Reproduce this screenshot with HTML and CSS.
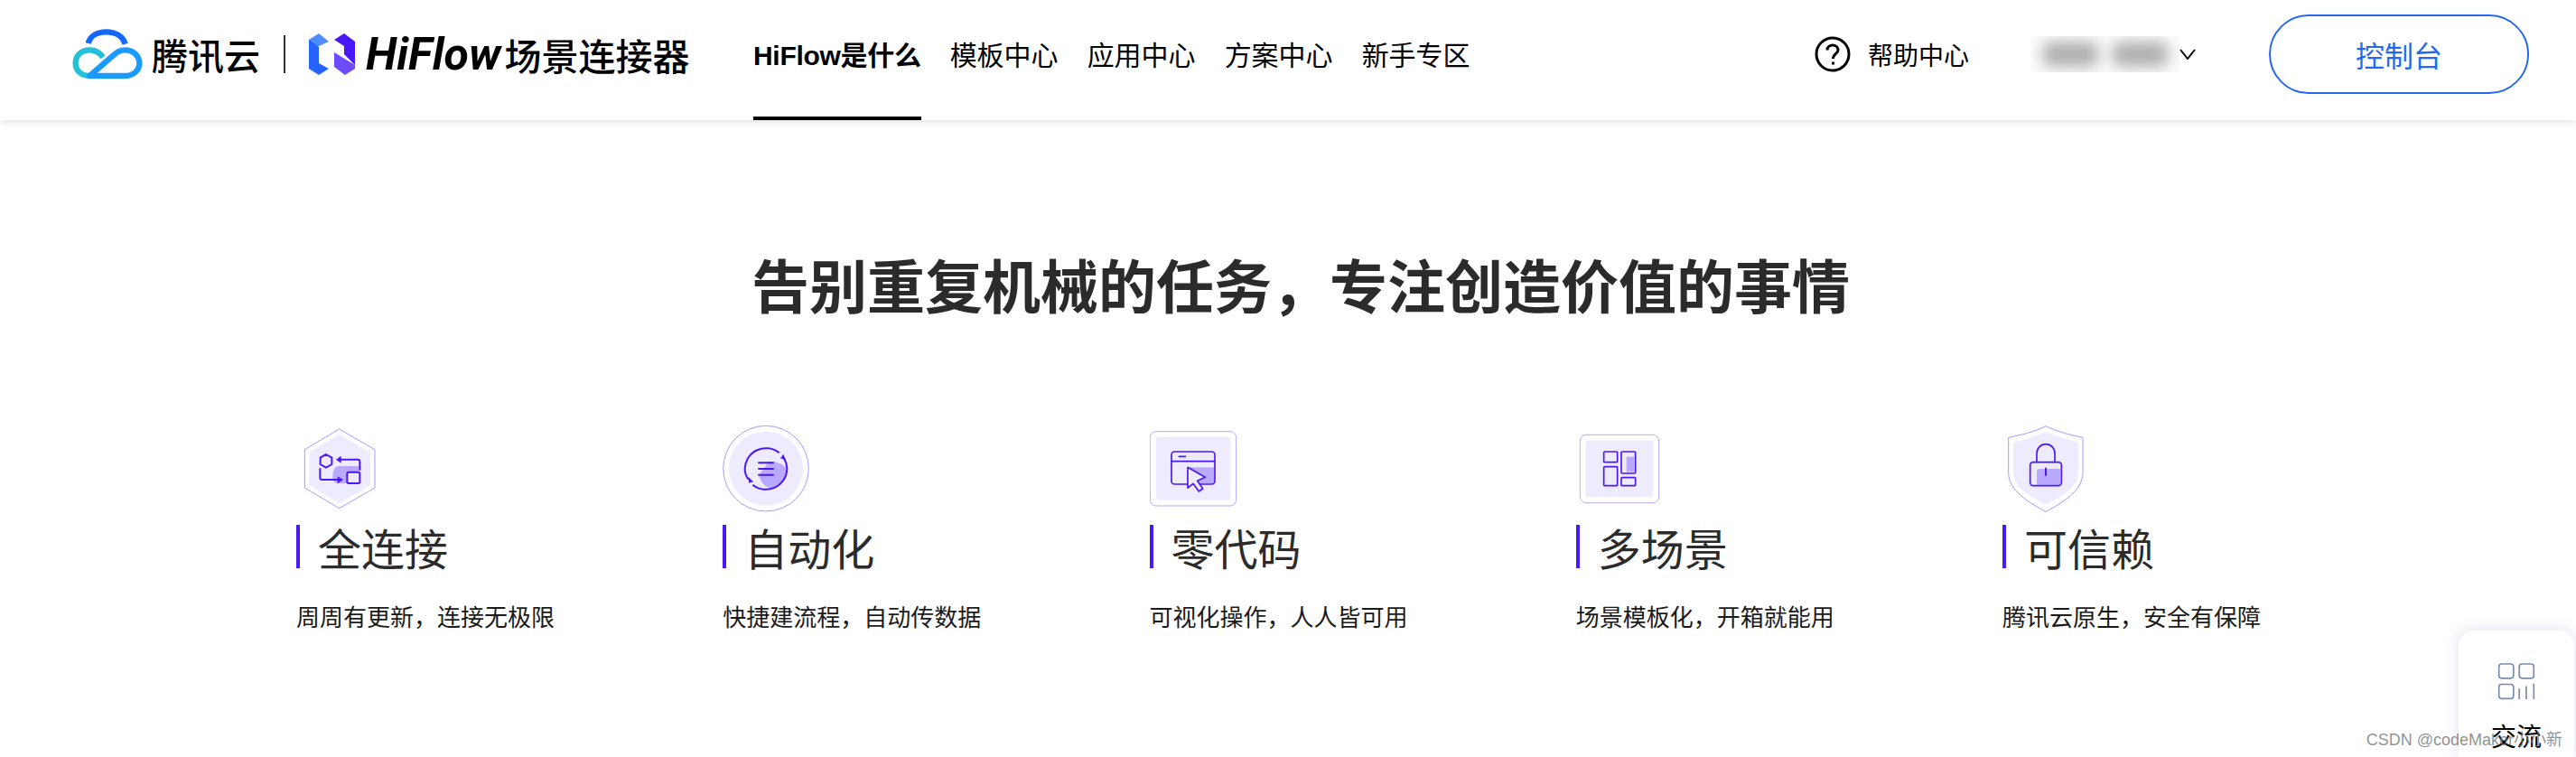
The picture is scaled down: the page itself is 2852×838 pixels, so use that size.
FILE: index.html
```html
<!DOCTYPE html>
<html lang="zh-CN">
<head>
    <meta charset="utf-8">
    <title>HiFlow场景连接器</title>
    <link rel="stylesheet" href="styles.css">
</head>
<body>
<header class="topbar">
    <div class="brand">
        <svg class="cloud" viewBox="54 30 240 180" width="80" height="60" fill="none" stroke-width="19">
            <path d="M113 84C120 58 145 46 172 46C205 46 228 62 236 86" stroke="#1467ff"/>
            <path d="M162 130C150 113 135 106 118 106C90 106 71 125 71 150C71 177 92 192 120 192" stroke="#23c1d8"/>
            <path d="M118 192H235C265 192 283 172 283 150C283 125 262 106 235 106C215 106 205 115 195 125L118 192Z" stroke="#1b9bff" stroke-linejoin="round"/>
        </svg>
        <span class="brand-tencent">腾讯云</span>
        <span class="brand-line"></span>
        <svg class="nlogo" viewBox="341 37 51 46" width="51" height="46">
            <path d="M341 44L352 37L363 46L352 51L341 56Z" fill="#4f8cff"/>
            <path d="M341 44L352 52V70L363 76L352 83L341 76Z" fill="#2563ff"/>
            <path d="M369 44L380 37L392 46V72L380 60V51Z" fill="#4a17f5"/>
            <path d="M369 58L392 72V76L381 83L369 74Z" fill="#6d4cff"/>
        </svg>
        <span class="brand-hiflow">HiFlow</span>
        <span class="brand-name">场景连接器</span>
    </div>
    <nav class="mainnav">
        <a class="navitem active" href="#">HiFlow是什么</a>
        <a class="navitem" href="#">模板中心</a>
        <a class="navitem" href="#">应用中心</a>
        <a class="navitem" href="#">方案中心</a>
        <a class="navitem" href="#">新手专区</a>
    </nav>
    <a class="help" href="#">
        <svg viewBox="0 0 40 40" width="40" height="40" fill="none" stroke="#000" stroke-width="3">
            <circle cx="20" cy="20" r="18"/>
            <path d="M14 15.5C14 12 17 10 20 10C23.500 10 26 12.500 26 15.500C26 19.500 20.500 19.500 20.500 25"/>
            <path d="M20.500 28.500V31.500"/>
        </svg>
        <span>帮助中心</span>
    </a>
    <div class="account">
        <div class="account-blur"><span class="blob"></span><span class="blob"></span></div>
        <svg viewBox="0 0 18 12" width="18" height="12" fill="none" stroke="#000" stroke-width="2"><path d="M1 1L9 11L17 1"/></svg>
    </div>
    <a class="console" href="#">控制台</a>
</header>

<main>
    <h1 class="headline">告别重复机械的任务&#xFF0C;专注创造价值的事情</h1>
    <section class="features">
        <div class="feature">
            <svg class="ficon" viewBox="54 33 330 288" width="110" height="96" fill="none">
                <path d="M197 45L315 113V240L197 308L82 240V113Z" stroke="#a899ff" stroke-width="3" stroke-linejoin="round"/>
                <path d="M197 62L300 122V232L197 292L97 232V122Z" fill="#efebff"/>
                <path d="M175 205Q175 168 195 168H262V188H222V225H190Q175 225 175 205Z" fill="#b9aaff"/>
                <g stroke="#4a17f5" stroke-width="6">
                    <path d="M153 129L172 140V162L153 173L134 162V140Z"/>
                    <path d="M265 182V152Q265 146 258 146H200"/>
                    <path d="M133 175V207Q133 213 140 213H195"/>
                    <rect x="223" y="188" width="42" height="37" rx="5"/>
                </g>
                <path d="M186 146L203 134V158Z" fill="#4a17f5"/>
                <path d="M210 213L191 202V226Z" fill="#4a17f5"/>
            </svg>
            <h3 class="ftitle">全连接</h3>
            <p class="fdesc">周周有更新&#xFF0C;连接无极限</p>
        </div>
        <div class="feature">
            <svg class="ficon" viewBox="60 33 330 288" width="110" height="96" fill="none">
                <circle cx="204" cy="176" r="142" stroke="#a899ff" stroke-width="3"/>
                <circle cx="204" cy="176" r="123" fill="#efebff"/>
                <path d="M215 152C245 152 268 165 272 180A68 68 0 0 1 222 243C195 235 182 215 182 195Z" fill="#b9aaff"/>
                <g stroke="#4a17f5" stroke-width="6">
                    <path d="M248 124A70 70 0 0 0 134 176C134 190 139 203 146 212"/>
                    <path d="M160 230A70 70 0 0 0 274 176C274 162 269 150 263 141"/>
                    <path d="M180 157H228M180 177H228M180 197H228" stroke-linecap="round"/>
                </g>
                <path d="M262 128L252 142L270 148Z" fill="#4a17f5"/>
                <path d="M147 224L162 220L146 204Z" fill="#4a17f5"/>
            </svg>
            <h3 class="ftitle">自动化</h3>
            <p class="fdesc">快捷建流程&#xFF0C;自动传数据</p>
        </div>
        <div class="feature">
            <svg class="ficon" viewBox="69 33 330 288" width="110" height="96" fill="none">
                <rect x="70" y="53" width="286" height="247" rx="20" stroke="#b8a9ff" stroke-width="3"/>
                <rect x="90" y="72" width="247" height="209" rx="8" fill="#efebff"/>
                <rect x="195" y="172" width="88" height="54" fill="#b9aaff"/>
                <g stroke="#4a17f5" stroke-width="5">
                    <rect x="141" y="120" width="144" height="108" rx="10"/>
                    <path d="M141 152H285M164 136H189"/>
                    <path d="M195 172L253 205L227 217L245 243L232 252L213 226L195 240Z" fill="#efebff" stroke-linejoin="round"/>
                </g>
            </svg>
            <h3 class="ftitle">零代码</h3>
            <p class="fdesc">可视化操作&#xFF0C;人人皆可用</p>
        </div>
        <div class="feature">
            <svg class="ficon" viewBox="45 33 330 288" width="110" height="96" fill="none">
                <rect x="58" y="64" width="262" height="226" rx="20" stroke="#b8a9ff" stroke-width="3"/>
                <rect x="77" y="83" width="224" height="188" rx="8" fill="#efebff"/>
                <rect x="212" y="137" width="26" height="51" fill="#b9aaff"/>
                <g stroke="#4a17f5" stroke-width="5">
                    <rect x="137" y="120" width="45" height="35" rx="3"/>
                    <rect x="137" y="170" width="45" height="63" rx="3"/>
                    <rect x="195" y="120" width="47" height="72" rx="3"/>
                    <rect x="195" y="206" width="47" height="27" rx="3"/>
                </g>
            </svg>
            <h3 class="ftitle">多场景</h3>
            <p class="fdesc">场景模板化&#xFF0C;开箱就能用</p>
        </div>
        <div class="feature">
            <svg class="ficon" viewBox="51 33 330 288" width="110" height="96" fill="none">
                <path d="M195 35C235 55 280 65 318 73V190C318 250 250 290 195 319C140 290 71 250 71 190V73C110 65 155 55 195 35Z" stroke="#a899ff" stroke-width="3"/>
                <path d="M195 55C235 72 270 82 303 88V190C303 240 245 270 195 296C145 270 87 240 87 190V88C120 82 155 72 195 55Z" fill="#efebff"/>
                <path d="M165 187Q165 177 175 177H243V230H165Z" fill="#b9aaff"/>
                <g stroke="#4a17f5" stroke-width="5">
                    <rect x="143" y="155" width="104" height="78" rx="10"/>
                    <path d="M165 155V125A30 30 0 0 1 225 125V155"/>
                    <path d="M195 173V200" stroke-width="6"/>
                </g>
            </svg>
            <h3 class="ftitle">可信赖</h3>
            <p class="fdesc">腾讯云原生&#xFF0C;安全有保障</p>
        </div>
    </section>
</main>

<aside class="sidecard">
    <svg viewBox="640 222 125 122" width="42" height="41" fill="none" stroke="#7b8cab" stroke-width="5">
        <rect x="645" y="225" width="48" height="47" rx="9"/>
        <rect x="712" y="225" width="48" height="47" rx="9"/>
        <rect x="645" y="292" width="48" height="47" rx="9"/>
        <path d="M712 306V341M735 298V341M760 290V341"/>
    </svg>
    <span>交流</span>
</aside>
<div class="watermark">CSDN @codeMaker小小新</div>
</body>
</html>
```

FILE: styles.css
```css
html, body {
    height: 100%;
}

body {
    margin: 0;
    position: relative;
    overflow: hidden;
    background: #fff;
    color: #000;
    font-family: "Noto Sans CJK SC", "Liberation Sans", sans-serif;
}

a {
    color: inherit;
    text-decoration: none;
}

.topbar {
    display: flex;
    align-items: center;
    height: 133px;
    padding: 0 52px 13px 78px;
    box-sizing: border-box;
    background: #fff;
    box-shadow: 0 2px 8px rgba(0, 0, 0, 0.12);
}

.brand {
    display: flex;
    align-items: center;
    width: 756px;
    flex: none;
}

.cloud {
    margin-right: 10px;
}

.brand-tencent {
    font-size: 40px;
    font-weight: 500;
    line-height: 48px;
}

.brand-line {
    width: 2px;
    height: 42px;
    margin: 0 26px;
    background: #333;
}

.brand-hiflow {
    margin-left: 12px;
    font-family: Roboto, sans-serif;
    font-size: 50px;
    font-style: italic;
    font-weight: 700;
    line-height: 50px;
}

.brand-name {
    margin-left: 4px;
    font-size: 41px;
    font-weight: 500;
    line-height: 50px;
}

.mainnav {
    display: flex;
    align-self: stretch;
    gap: 32px;
    margin-bottom: -13px;
}

.navitem {
    display: flex;
    align-items: center;
    padding-bottom: 12px;
    box-sizing: border-box;
    font-size: 30px;
    border-bottom: 4px solid transparent;
}

.navitem.active {
    font-family: "Liberation Sans", "Noto Sans CJK SC", sans-serif;
    font-weight: 700;
    letter-spacing: -0.3px;
    border-bottom-color: #000;
}

.help {
    display: flex;
    align-items: center;
    gap: 19px;
    margin-left: auto;
    font-size: 28px;
}

.account {
    display: flex;
    align-items: center;
    margin-left: 69px;
}

.account-blur {
    display: flex;
    gap: 14px;
    width: 164px;
    height: 40px;
    padding: 6px 12px;
    box-sizing: border-box;
    overflow: hidden;
    background: #fbfbfb;
}

.blob {
    width: 64px;
    height: 28px;
    background: #b0b0b0;
    border-radius: 12px;
    filter: blur(8px);
}

.console {
    display: flex;
    align-items: center;
    justify-content: center;
    width: 288px;
    height: 88px;
    margin-left: 81px;
    box-sizing: border-box;
    border: 2px solid #2468f2;
    border-radius: 44px;
    color: #2468f2;
    font-size: 32px;
}

.headline {
    margin: 135px 0 0;
    padding-left: 28px;
    font-size: 64px;
    font-weight: 700;
    line-height: 90px;
    text-align: center;
    color: #2b2b2b;
}

.features {
    display: grid;
    grid-template-columns: repeat(5, 472.25px);
    margin: 113px 0 0 328px;
}

.ficon {
    display: block;
}

.ftitle {
    margin: 14px 0 0;
    height: 48px;
    padding-left: 20px;
    border-left: 4px solid #4a17f5;
    font-size: 48px;
    font-weight: 400;
    line-height: 48px;
    color: #2b2b2b;
}

.fdesc {
    margin: 35px 0 0;
    font-size: 26px;
    line-height: 36px;
    color: #1a1a1a;
}

.sidecard {
    position: absolute;
    top: 698px;
    right: 2px;
    display: flex;
    flex-direction: column;
    align-items: center;
    gap: 22px;
    width: 128px;
    height: 140px;
    padding-top: 36px;
    box-sizing: border-box;
    background: #fff;
    border-radius: 16px 16px 0 0;
    box-shadow: 0 0 16px rgba(120, 130, 190, 0.25);
    font-size: 28px;
    line-height: 34px;
}

.watermark {
    position: absolute;
    right: 15px;
    bottom: 6px;
    font-family: "Liberation Sans", "Noto Sans CJK SC", sans-serif;
    font-size: 18px;
    line-height: 26px;
    color: rgba(110, 110, 110, 0.75);
}
```
